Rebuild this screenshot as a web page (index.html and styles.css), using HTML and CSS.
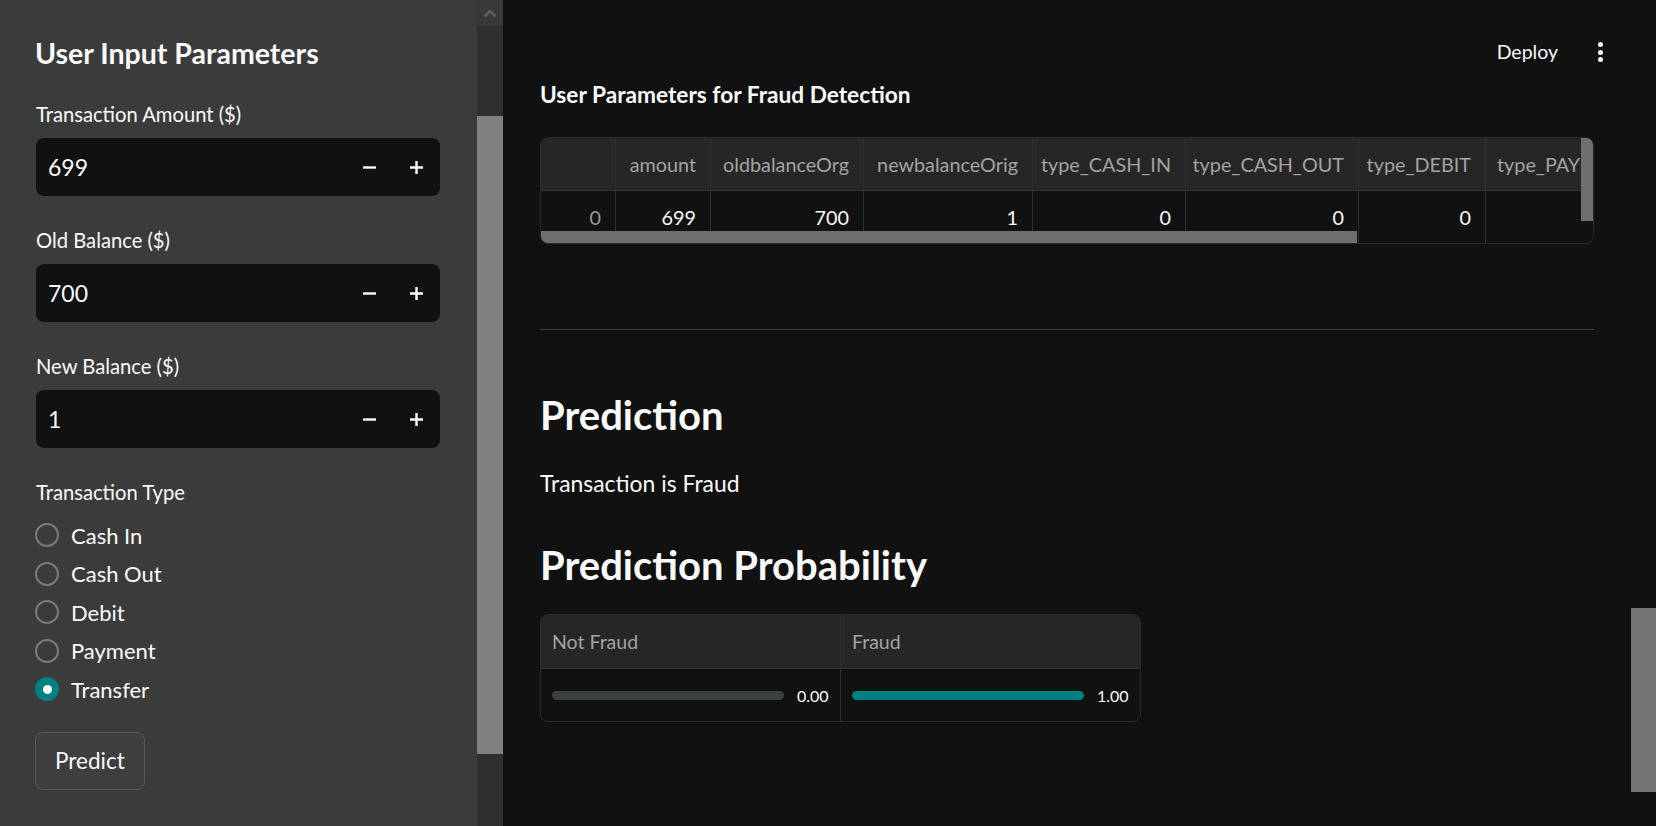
FILE: index.html
```html
<!DOCTYPE html>
<html>
<head>
<meta charset="utf-8">
<link rel="stylesheet" href="styles.css">
</head>
<body>
<div class="app">
  <aside class="sidebar">
    <div class="sidebar-content">
      <h2 class="side-title">User Input Parameters</h2>
      <div class="field">
        <div class="label">Transaction Amount ($)</div>
        <div class="number-input">
          <span class="value">699</span>
          <span class="step"><svg width="13" height="13" viewBox="0 0 13 13"><path d="M0 6.5H13" stroke="#fafafa" stroke-width="2.4"/></svg></span>
          <span class="step"><svg width="13" height="13" viewBox="0 0 13 13"><path d="M0 6.5H13M6.5 0V13" stroke="#fafafa" stroke-width="2.4"/></svg></span>
        </div>
      </div>
      <div class="field">
        <div class="label">Old Balance ($)</div>
        <div class="number-input">
          <span class="value">700</span>
          <span class="step"><svg width="13" height="13" viewBox="0 0 13 13"><path d="M0 6.5H13" stroke="#fafafa" stroke-width="2.4"/></svg></span>
          <span class="step"><svg width="13" height="13" viewBox="0 0 13 13"><path d="M0 6.5H13M6.5 0V13" stroke="#fafafa" stroke-width="2.4"/></svg></span>
        </div>
      </div>
      <div class="field">
        <div class="label">New Balance ($)</div>
        <div class="number-input">
          <span class="value">1</span>
          <span class="step"><svg width="13" height="13" viewBox="0 0 13 13"><path d="M0 6.5H13" stroke="#fafafa" stroke-width="2.4"/></svg></span>
          <span class="step"><svg width="13" height="13" viewBox="0 0 13 13"><path d="M0 6.5H13M6.5 0V13" stroke="#fafafa" stroke-width="2.4"/></svg></span>
        </div>
      </div>
      <div class="field">
        <div class="label">Transaction Type</div>
        <div class="radio-list">
          <div class="radio"><span class="circle"></span><span>Cash In</span></div>
          <div class="radio"><span class="circle"></span><span>Cash Out</span></div>
          <div class="radio"><span class="circle"></span><span>Debit</span></div>
          <div class="radio"><span class="circle"></span><span>Payment</span></div>
          <div class="radio"><span class="circle checked"></span><span>Transfer</span></div>
        </div>
      </div>
      <button class="btn">Predict</button>
    </div>
    <div class="side-scroll">
      <div class="side-scroll-up"><svg width="14" height="9" viewBox="0 0 14 9"><path d="M1.5 7.5L7 2L12.5 7.5" fill="none" stroke="#5e5e5e" stroke-width="2.6"/></svg></div>
      <div class="side-scroll-track"><div class="side-scroll-thumb"></div></div>
    </div>
  </aside>

  <main class="main">
    <header class="topbar">
      <span class="deploy">Deploy</span>
      <span class="kebab"><i></i><i></i><i></i></span>
    </header>

    <h3 class="subhead">User Parameters for Fraud Detection</h3>

    <div class="df">
      <div class="df-row df-head">
        <div class="cell"></div>
        <div class="cell">amount</div>
        <div class="cell">oldbalanceOrg</div>
        <div class="cell">newbalanceOrig</div>
        <div class="cell">type_CASH_IN</div>
        <div class="cell">type_CASH_OUT</div>
        <div class="cell">type_DEBIT</div>
        <div class="cell">type_PAYMENT</div>
      </div>
      <div class="df-row df-body">
        <div class="cell idx">0</div>
        <div class="cell">699</div>
        <div class="cell">700</div>
        <div class="cell">1</div>
        <div class="cell">0</div>
        <div class="cell">0</div>
        <div class="cell">0</div>
        <div class="cell">0</div>
      </div>
      <div class="df-hscroll"></div>
      <div class="df-vscroll"></div>
    </div>

    <hr class="divider">

    <h2 class="title">Prediction</h2>
    <p class="text">Transaction is Fraud</p>
    <h2 class="title title-2">Prediction Probability</h2>

    <div class="prob">
      <div class="prob-row prob-head">
        <div class="pcell">Not Fraud</div>
        <div class="pcell">Fraud</div>
      </div>
      <div class="prob-row prob-body">
        <div class="pcell"><span class="bar"><span class="fill fill-0"></span></span><span class="num">0.00</span></div>
        <div class="pcell"><span class="bar"><span class="fill fill-1"></span></span><span class="num">1.00</span></div>
      </div>
    </div>
  </main>

  <div class="main-scroll-thumb"></div>
</div>
</body>
</html>
```

FILE: styles.css
```css
* { box-sizing: border-box; }

html, body {
  margin: 0;
  padding: 0;
}

body {
  background: #111111;
  color: #fafafa;
  font-family: Lato, "Noto Sans", sans-serif;
}

.app {
  position: relative;
  display: flex;
  width: 1656px;
  height: 826px;
  overflow: hidden;
}

/* ---------- Sidebar ---------- */
.sidebar {
  flex: none;
  width: 503px;
  height: 826px;
  display: flex;
  background: #3b3b3b;
}

.sidebar-content {
  width: 477px;
  padding: 35px 37px 0 36px;
}

.side-title {
  margin: 0 0 29px -1px;
  font-size: 28.5px;
  line-height: 36px;
  font-weight: 700;
}

.field + .field {
  margin-top: 30px;
}

.label {
  font-size: 20.2px;
  line-height: 28px;
}

.number-input {
  margin-top: 10px;
  height: 58px;
  background: #111111;
  border-radius: 8px;
  display: flex;
  align-items: center;
  padding-left: 12px;
}

.value {
  flex: 1;
  font-size: 23px;
}

.step {
  width: 47px;
  height: 58px;
  display: flex;
  align-items: center;
  justify-content: center;
}

.radio-list {
  margin-top: 10px;
  display: flex;
  flex-direction: column;
}

.radio {
  height: 38.5px;
  display: flex;
  align-items: center;
  gap: 12px;
  font-size: 22px;
}

.circle {
  margin-left: -1px;
  width: 24px;
  height: 24px;
  border-radius: 50%;
  border: 2px solid #7a7a7a;
  display: flex;
  align-items: center;
  justify-content: center;
}

.circle.checked {
  border: none;
  background: #008080;
}

.circle.checked::after {
  content: "";
  width: 9px;
  height: 9px;
  border-radius: 50%;
  background: #ffffff;
}

.btn {
  margin-top: 23px;
  margin-left: -1px;
  height: 58px;
  padding: 0 19px;
  background: #3e3e3e;
  border: 1px solid #585858;
  border-radius: 8px;
  color: #fafafa;
  font-family: inherit;
  font-size: 22.5px;
}

.side-scroll {
  width: 26px;
  display: flex;
  flex-direction: column;
  background: #2f2f2f;
}

.side-scroll-up {
  height: 26px;
  background: #393939;
  display: flex;
  align-items: center;
  justify-content: center;
}

.side-scroll-track {
  flex: 1;
  padding-top: 90px;
}

.side-scroll-thumb {
  height: 638px;
  background: #808080;
}

/* ---------- Main ---------- */
.main {
  flex: 1;
  padding: 0 62px 0 37px;
}

.topbar {
  height: 80px;
  margin-right: -62px;
  padding: 38px 46px 0 0;
  display: flex;
  justify-content: flex-end;
  align-items: flex-start;
}

.deploy {
  font-size: 19.5px;
  line-height: 28px;
}

.kebab {
  margin-left: 32px;
  width: 20px;
  height: 28px;
  display: flex;
  flex-direction: column;
  align-items: center;
  justify-content: center;
  gap: 2.5px;
}

.kebab i {
  width: 5px;
  height: 5px;
  border-radius: 50%;
  background: #fafafa;
}

.subhead {
  margin: 0;
  font-size: 22.7px;
  line-height: 30px;
  font-weight: 700;
}

.df {
  position: relative;
  margin-top: 27px;
  width: 1054px;
  height: 107px;
  border: 1px solid #2a2a2a;
  border-radius: 8px;
  overflow: hidden;
}

.df-row {
  display: grid;
  grid-template-columns: 75px 95px 153px 169px 153px 173px 127px 170px;
}

.df-head {
  height: 53px;
  background: #262626;
  border-bottom: 1px solid #333333;
  color: #a3a3a3;
}

.df-body {
  height: 52px;
}

.cell {
  display: flex;
  align-items: center;
  justify-content: flex-end;
  padding-right: 14px;
  border-right: 1px solid #2e2e2e;
  font-size: 19.8px;
  white-space: nowrap;
  overflow: hidden;
}

.df-head .cell:last-child {
  justify-content: flex-start;
  padding-left: 11px;
}

.cell.idx {
  color: #9a9a9a;
}

.df-hscroll {
  position: absolute;
  left: 0;
  bottom: 0;
  width: 816px;
  height: 12px;
  background: #6e6e6e;
}

.df-vscroll {
  position: absolute;
  right: 0;
  top: 0;
  width: 12px;
  height: 83px;
  background: #6e6e6e;
}

.divider {
  margin: 85px 0 0;
  height: 1px;
  border: none;
  background: #3a3a3a;
}

.title {
  margin: 62px 0 0;
  font-size: 40px;
  line-height: 46px;
  font-weight: 700;
}

.title-2 {
  margin-top: 43px;
}

.text {
  margin: 29px 0 0;
  font-size: 22.9px;
  line-height: 32px;
}

.prob {
  margin-top: 26px;
  width: 601px;
  height: 108px;
  border: 1px solid #2a2a2a;
  border-radius: 8px;
  overflow: hidden;
}

.prob-row {
  display: grid;
  grid-template-columns: 300px 300px;
}

.prob-head {
  height: 54px;
  background: #262626;
  border-bottom: 1px solid #333333;
  color: #a3a3a3;
}

.prob-body {
  height: 52px;
}

.pcell {
  display: flex;
  align-items: center;
  padding-left: 11px;
  border-right: 1px solid #2e2e2e;
  font-size: 19.5px;
}

.pcell:last-child {
  border-right: none;
}

.prob-body .pcell {
  gap: 13px;
}

.bar {
  width: 232px;
  height: 9px;
  border-radius: 5px;
  background: #3b3f3f;
  overflow: hidden;
  display: flex;
}

.fill {
  height: 100%;
  border-radius: 5px;
}

.fill-0 {
  width: 0;
}

.fill-1 {
  width: 100%;
  background: #008080;
}

.num {
  font-size: 16px;
}

.main-scroll-thumb {
  position: absolute;
  right: 0;
  top: 608px;
  width: 25px;
  height: 184px;
  background: #737373;
}
```
